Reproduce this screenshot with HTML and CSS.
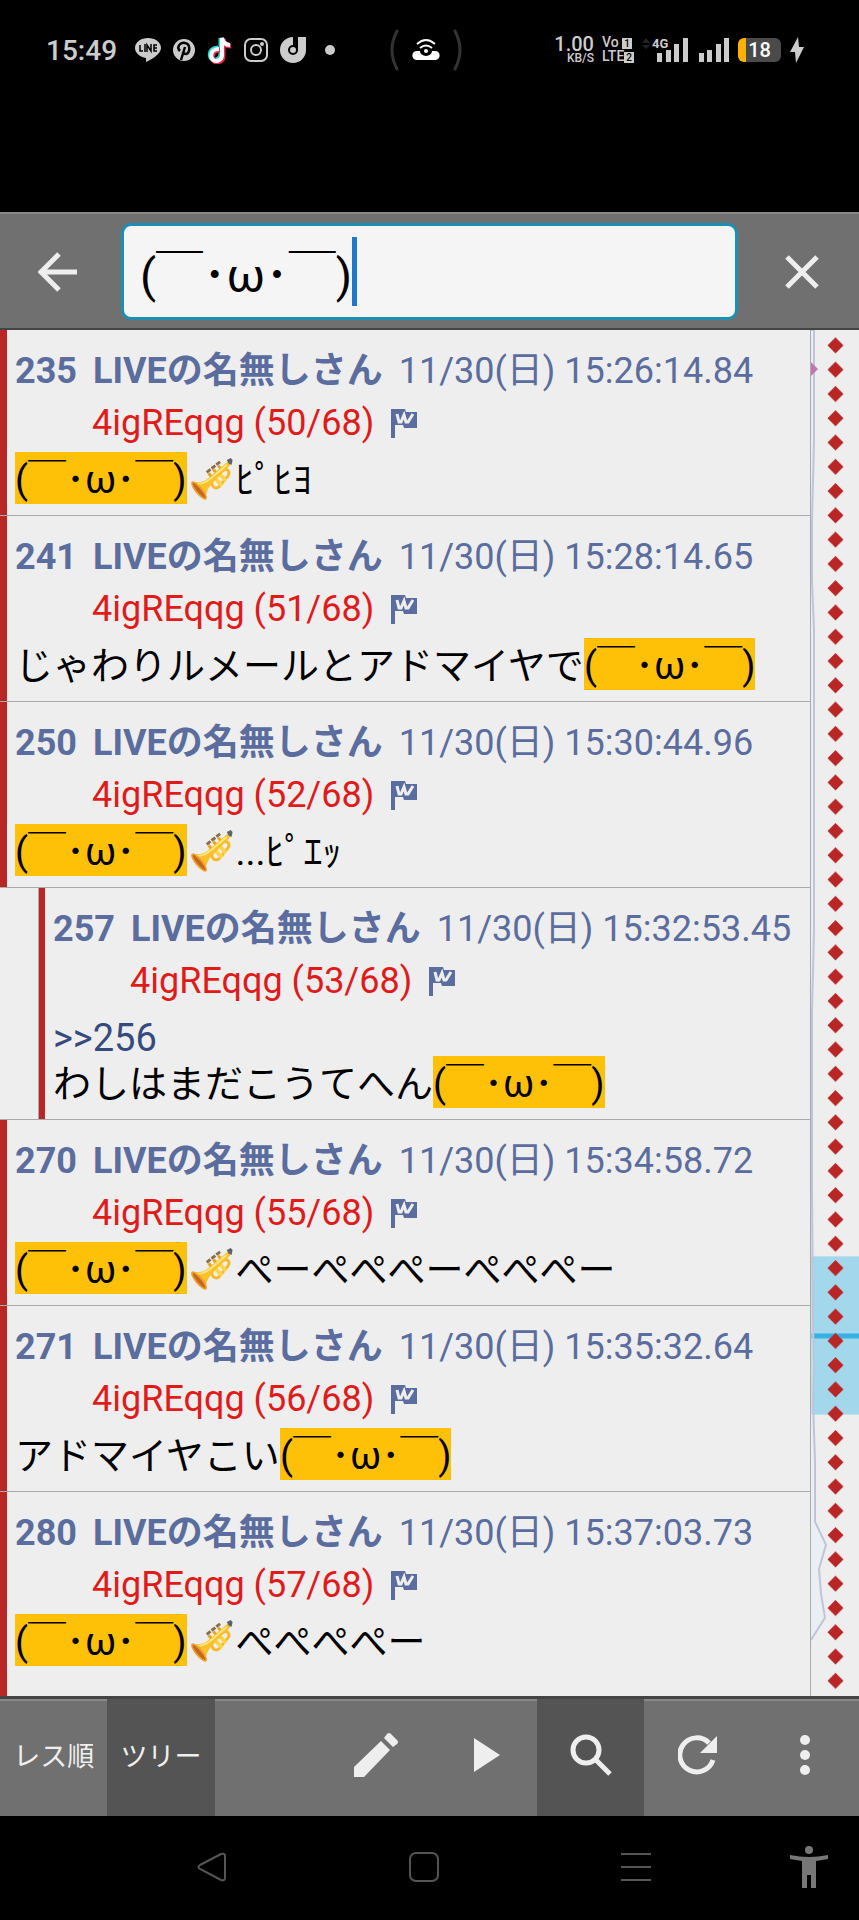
FILE: index.html
```
<!DOCTYPE html>
<html lang="ja">
<head>
<meta charset="UTF-8">
<meta name="viewport" content="width=device-width, initial-scale=1.0">
<link rel="stylesheet" href="styles.css">
<title>スレッド検索</title>
</head>
<body>
<!-- shared symbols -->
<svg class="defs" aria-hidden="true">
  <symbol id="flag" viewBox="0 0 28 30">
    <path d="M1 1h14l1 3h11v16H14l-1-3H5v13H1z" fill="#5a6d9e"/>
    <path d="M7 6l2 8h2l3-7 2 7h2l5-8" fill="none" stroke="#eee" stroke-width="3"/>
  </symbol>
  <symbol id="trumpet" viewBox="0 0 48 48">
    <path d="M21 17l5 6M26 13l5 6M31 9l5 6" stroke="#e3a526" stroke-width="3"/>
    <path d="M19 16l4-3M24 12l4-3M29 8l4-3" stroke="#8a6d4a" stroke-width="3"/>
    <path d="M26 23l10-9c5-3 8 2 5 6L32 31c-5 4-10-2-6-8z" fill="none" stroke="#f9b824" stroke-width="3"/>
    <path d="M26 20l9 10M31 16l8 9" stroke="#ffd449" stroke-width="4"/>
    <path d="M3 26c9 1 14 0 20-6L42 4l3 3-18 18c-6 6-9 11-9 19z" fill="#fcc02b"/>
    <path d="M9 28c7 0 11-3 17-8L40 8" fill="none" stroke="#ffe680" stroke-width="2"/>
    <ellipse cx="11" cy="35" rx="4" ry="12" transform="rotate(-40 11 35)" fill="#f0a02a"/>
    <ellipse cx="11" cy="35" rx="2" ry="10" transform="rotate(-40 11 35)" fill="#c4661d"/>
    <path d="M40 3l4-2 2 2-1 5-3-1z" fill="#5b646a"/>
  </symbol>
</svg>

<div class="screen">
  <div class="status">
    <div class="status-side">
      <span class="clock">15:49</span>
      <svg width="26" height="26" viewBox="0 0 26 26"><path d="M13 1C6 1 0 5 0 11c0 5 5 9 11 10v4c5-2 15-8 15-14C26 5 20 1 13 1z" fill="#ccc"/><path d="M5 8v6h3M10 7v8M12 15V8l4 6V7M22 8h-3v6h3M19 11h3" fill="none" stroke="#000" stroke-width="1.5"/></svg>
      <svg width="24" height="24" viewBox="0 0 24 24"><circle cx="12" cy="12" r="11" fill="#ccc"/><path d="M8 13C4 9 8 4 13 5c6 1 5 10 1 11-2 0-3-1-3-2M13 9L9 22" fill="none" stroke="#000" stroke-width="2.5"/></svg>
      <svg width="26" height="28" viewBox="0 0 26 28"><g fill="none" stroke-width="5"><path d="M11 12c-11 0-9 13-2 12 4-1 5-3 5-6V2c1 5 4 7 8 7" stroke="#25d9d4"/><path d="M13 14c-11 0-9 13-2 12 4-1 5-3 5-6V3c1 5 4 7 8 7" stroke="#ee2850"/><path d="M12 13c-11 0-9 13-2 12 4-1 5-3 5-6V2c1 5 4 7 8 7" stroke="#fff" stroke-width="4"/></g></svg>
      <svg width="24" height="24" viewBox="0 0 24 24"><g fill="none" stroke="#ccc" stroke-width="2"><rect x="1" y="1" width="22" height="22" rx="6"/><circle cx="12" cy="12" r="5"/></g><circle cx="18" cy="6" r="2" fill="#ccc"/></svg>
      <svg width="28" height="28" viewBox="0 0 28 28"><path d="M14 5a9 9 0 1 0 9 9V1" fill="none" stroke="#ccc" stroke-width="8"/><circle cx="14" cy="14" r="3" fill="#ccc"/><path d="M18 0v10" stroke="#000" stroke-width="2"/></svg>
      <svg class="more-dot" width="12" height="12" viewBox="0 0 12 12"><circle cx="6" cy="6" r="5" fill="#ccc"/></svg>
    </div>
    <svg width="72" height="42" viewBox="0 0 72 42"><path d="M7 2Q-3 21 7 40M65 2Q75 21 65 40" fill="none" stroke="#333" stroke-width="3" stroke-linecap="round"/><path d="M26 31c-5-1-5-9 1-9h3a6 5 0 0 0 12 0h3c6 0 6 8 1 9z" fill="#fff"/><g fill="none" stroke="#fff" stroke-width="2"><path d="M27 15q9-8 18 0M30 19q6-5 12 0"/></g><circle cx="36" cy="22" r="2" fill="#fff"/></svg>
    <div class="status-side status-right">
      <div class="tiny speed"><b>1.00</b><span>KB/S</span></div>
      <div class="tiny volte"><span>Vo <i>1</i></span><span>LTE<i>2</i></span></div>
      <svg width="48" height="26" viewBox="0 0 48 26"><path d="M0 6l4-5 4 5zM0 8l4 4 4-4z" fill="#222"/><g fill="#ccc"><text x="10" y="11" class="net">4G</text><path d="M15 16h5v9h-5zM24 13h5v12h-5zM32 7h5v18h-5zM41 1h5v24h-5z"/></g></svg>
      <svg width="32" height="26" viewBox="0 0 32 26"><path d="M1 16h5v9H1zM9 13h5v12H9zM18 7h5v18h-5zM26 1h5v24h-5z" fill="#ccc"/></svg>
      <div class="battery">18</div>
      <svg width="16" height="26" viewBox="0 0 16 26"><path d="M9 0L1 15h5l1 11 8-16h-5z" fill="#ccc"/></svg>
    </div>
  </div>

  <header class="search-bar">
    <button class="icon-btn back" aria-label="戻る">
      <svg width="40" height="40" viewBox="0 0 40 40"><path d="M39 20H4M21 2L3 20l18 18" fill="none" stroke="#eee" stroke-width="5"/></svg>
    </button>
    <div class="search-box">
      <input type="text" aria-label="検索" value="(￣･ω･￣)">
      <span class="caret"></span>
    </div>
    <button class="icon-btn close" aria-label="閉じる">
      <svg width="34" height="34" viewBox="0 0 34 34"><path d="M2 2l30 30M32 2L2 32" stroke="#eee" stroke-width="5"/></svg>
    </button>
  </header>

  <main class="thread">
    <div class="posts">
      <article class="post">
        <div class="head"><b>235</b><b>LIVEの名無しさん</b><span>11/30(日) 15:26:14.84</span></div>
        <div class="id">4igREqqg (50/68)<svg><use href="#flag"/></svg></div>
        <p><mark>(￣･ω･￣)</mark><svg><use href="#trumpet"/></svg>ﾋﾟﾋﾖ</p>
      </article>
      <article class="post">
        <div class="head"><b>241</b><b>LIVEの名無しさん</b><span>11/30(日) 15:28:14.65</span></div>
        <div class="id">4igREqqg (51/68)<svg><use href="#flag"/></svg></div>
        <p>じゃわりルメールとアドマイヤで<mark>(￣･ω･￣)</mark></p>
      </article>
      <article class="post">
        <div class="head"><b>250</b><b>LIVEの名無しさん</b><span>11/30(日) 15:30:44.96</span></div>
        <div class="id">4igREqqg (52/68)<svg><use href="#flag"/></svg></div>
        <p><mark>(￣･ω･￣)</mark><svg><use href="#trumpet"/></svg>...ﾋﾟｴｯ</p>
      </article>
      <article class="post reply">
        <div class="head"><b>257</b><b>LIVEの名無しさん</b><span>11/30(日) 15:32:53.45</span></div>
        <div class="id">4igREqqg (53/68)<svg><use href="#flag"/></svg></div>
        <p><a href="#256">&gt;&gt;256</a><br>わしはまだこうてへん<mark>(￣･ω･￣)</mark></p>
      </article>
      <article class="post">
        <div class="head"><b>270</b><b>LIVEの名無しさん</b><span>11/30(日) 15:34:58.72</span></div>
        <div class="id">4igREqqg (55/68)<svg><use href="#flag"/></svg></div>
        <p><mark>(￣･ω･￣)</mark><svg><use href="#trumpet"/></svg>ぺーぺぺぺーぺぺぺー</p>
      </article>
      <article class="post">
        <div class="head"><b>271</b><b>LIVEの名無しさん</b><span>11/30(日) 15:35:32.64</span></div>
        <div class="id">4igREqqg (56/68)<svg><use href="#flag"/></svg></div>
        <p>アドマイヤこい<mark>(￣･ω･￣)</mark></p>
      </article>
      <article class="post">
        <div class="head"><b>280</b><b>LIVEの名無しさん</b><span>11/30(日) 15:37:03.73</span></div>
        <div class="id">4igREqqg (57/68)<svg><use href="#flag"/></svg></div>
        <p><mark>(￣･ω･￣)</mark><svg><use href="#trumpet"/></svg>ぺぺぺぺー</p>
      </article>
    </div>
    <!-- scroll map with hit markers -->
    <div class="rail">
      <svg viewBox="0 0 48 1364" preserveAspectRatio="none">
        <defs>
          <pattern id="hit" x="16" y="3.5" width="17" height="24.245" patternUnits="userSpaceOnUse"><path d="M8.5 4l8 8-8 8-8-8z" fill="#b92626"/></pattern>
        </defs>
        <rect y="925" width="48" height="158" fill="#a3d7ec"/>
        <rect y="1002" width="48" height="5" fill="#37b1e3"/>
        <path d="M0 0H3V110L1 190V250L3 300V600L1 680V860L2 990L3 1040L2 1070L4 1130V1190L15 1213L8 1237L10 1262L14 1286L0 1308" fill="#e8f0f6" fill-opacity=".4" stroke="#bfc4dc" stroke-width="2"/>
        <path d="M0 32l7 7-7 7z" fill="#c078b0"/>
        <rect x="16" y="3.5" width="17" height="1358" fill="url(#hit)"/>
      </svg>
    </div>
  </main>

  <nav class="toolbar">
    <button>レス順</button>
    <button class="active">ツリー</button>
    <span></span>
    <button aria-label="書き込み"><svg width="44" height="44" viewBox="0 0 44 44"><path d="M0 34L27 8l9 9L10 44H0zM30 5l3-4q2-2 4 0l6 6q2 2 0 4l-4 3z" fill="#eee"/></svg></button>
    <button aria-label="再生"><svg width="34" height="34" viewBox="0 0 34 34"><path d="M8 0l26 17L8 34z" fill="#eee"/></svg></button>
    <button class="active" aria-label="検索"><svg width="42" height="42" viewBox="0 0 42 42"><circle cx="16" cy="16" r="13" fill="none" stroke="#eee" stroke-width="5"/><path d="M26 26l14 14" stroke="#eee" stroke-width="5"/></svg></button>
    <button aria-label="更新"><svg width="40" height="40" viewBox="0 0 40 40"><path d="M35 25A17 17 0 1 1 31 8" fill="none" stroke="#eee" stroke-width="5"/><path d="M39 1v17H22z" fill="#eee"/></svg></button>
    <button aria-label="メニュー"><svg width="10" height="40" viewBox="0 0 10 40"><g fill="#eee"><circle cx="5" cy="5" r="5"/><circle cx="5" cy="20" r="5"/><circle cx="5" cy="35" r="5"/></g></svg></button>
  </nav>

  <div class="sysnav">
    <button aria-label="戻る"><svg width="30" height="30" viewBox="0 0 30 30"><path d="M3 13L24 2q4-1 4 2v22q0 3-4 2L3 17q-3-2 0-4z" fill="none" stroke="#555" stroke-width="2"/></svg></button>
    <button aria-label="ホーム"><svg width="30" height="30" viewBox="0 0 30 30"><rect x="1" y="1" width="28" height="28" rx="6" fill="none" stroke="#555" stroke-width="2"/></svg></button>
    <button aria-label="履歴"><svg width="30" height="30" viewBox="0 0 30 30"><path d="M0 2h30M0 15h30M0 28h30" stroke="#555" stroke-width="2"/></svg></button>
    <button class="access" aria-label="ユーザー補助"><svg width="38" height="42" viewBox="0 0 38 42"><g fill="#777"><circle cx="19" cy="4" r="4"/><path d="M0 9q19 4 38 0v4l-12 2v27h-5V29h-4v13h-5V15L0 13z"/></g></svg></button>
  </div>
</div>
</body>
</html>
```
FILE: styles.css
```
* {
  box-sizing: border-box;
}
body {
  margin: 0;
  background: #000;
  font-family: Roboto, "Noto Sans CJK JP", sans-serif;
}
button {
  display: flex;
  align-items: center;
  justify-content: center;
  padding: 0;
  border: none;
  background: none;
  color: #eee;
  font: inherit;
  cursor: pointer;
}
.defs {
  display: none;
}
.screen {
  display: flex;
  flex-direction: column;
  min-height: 100vh;
}

/* phone status bar */
.status {
  display: flex;
  justify-content: space-between;
  align-items: center;
  height: 100px;
  margin-bottom: 112px;
  padding: 0 54px 0 46px;
}
.status-side {
  display: flex;
  align-items: center;
  flex: 1;
  gap: 11px;
  color: #ccc;
}
.status-right {
  justify-content: flex-end;
  gap: 8px;
}
.clock {
  margin-right: 7px;
  font-size: 28px;
  font-weight: 500;
}
.more-dot {
  margin-left: 6px;
}
.tiny {
  display: flex;
  flex-direction: column;
  font-size: 14px;
  line-height: 13px;
  font-weight: 500;
}
.speed {
  align-items: flex-end;
  font-size: 12px;
  line-height: 12px;
}
.speed b {
  font-size: 20px;
  font-weight: 500;
  line-height: 16px;
}
.volte i {
  padding: 0 2px;
  background: #ccc;
  color: #000;
  font-size: 10px;
  font-style: normal;
}
.net {
  font-size: 13px;
  font-weight: 700;
}
.battery {
  width: 43px;
  border-radius: 6px;
  background: linear-gradient(to right, #ffb000 8px, #4a4a4a 8px);
  color: #fff;
  font-size: 20px;
  font-weight: 500;
  line-height: 24px;
  text-align: center;
}

/* search bar */
.search-bar {
  display: grid;
  grid-template-columns: 121px 1fr 121px;
  height: 118px;
  padding: 9px 0 8px;
  border-top: 2px solid #888;
  border-bottom: 2px solid #444;
  background: #707070;
}
.back {
  padding-right: 6px;
}
.close {
  padding-left: 6px;
}
.search-box {
  position: relative;
}
.search-box input {
  width: 100%;
  height: 97px;
  padding: 0 16px;
  border: 3px solid #1c90b4;
  border-radius: 10px;
  outline: none;
  background: #f5f5f5;
  color: #000;
  font-family: inherit;
  font-size: 47px;
}
.caret {
  position: absolute;
  top: 14px;
  left: 231px;
  width: 5px;
  height: 69px;
  background: #1f78c8;
}

/* posts */
.thread {
  display: flex;
  flex: 1;
  background: #eee;
}
.posts {
  flex: 1;
  border-right: 1px solid #aaa;
}
.post {
  position: relative;
  padding: 15px 0 12px 15px;
  border-bottom: 1px solid #aaa;
  box-shadow: inset 7px 0 #b92626;
  white-space: nowrap;
}
.post:last-child {
  height: 204px;
  border-bottom: none;
}
.reply {
  padding-left: 53px;
  box-shadow: inset 38px 0 #eee, inset 39px 0 #aaa, inset 45px 0 #b92626;
}
.head {
  display: flex;
  gap: 16px;
  color: #5a6d9e;
  font-size: 36px;
  line-height: 52px;
}
.id {
  display: flex;
  align-items: center;
  gap: 16px;
  padding-left: 77px;
  color: #e01b1b;
  font-size: 36px;
  line-height: 52px;
}
.id svg {
  width: 28px;
  height: 30px;
}
.post p {
  margin: 8px 0 0;
  color: #000;
  font-size: 38px;
  line-height: 46px;
}
.post p svg {
  width: 49px;
  height: 46px;
  vertical-align: top;
}
.post a {
  color: #354a7d;
  text-decoration: none;
}
mark {
  padding: 6px 0 2px;
  background: #ffc107;
  color: #000;
}
.rail {
  width: 48px;
}
.rail svg {
  display: block;
  width: 48px;
  height: 100%;
}

/* bottom bars */
.toolbar {
  display: grid;
  grid-template-columns: repeat(8, 1fr);
  height: 120px;
  border-top: 3px solid #444;
  background: #707070;
  box-shadow: inset 0 2px #888;
  font-size: 27px;
}
.toolbar button {
  padding-bottom: 6px;
}
.toolbar .active {
  background: #545454;
}
.sysnav {
  display: grid;
  grid-template-columns: 20fr 20fr 20fr 11fr;
  height: 105px;
  padding: 0 0 3px 12.4%;
}
.access {
  padding-left: 16px;
}
```
